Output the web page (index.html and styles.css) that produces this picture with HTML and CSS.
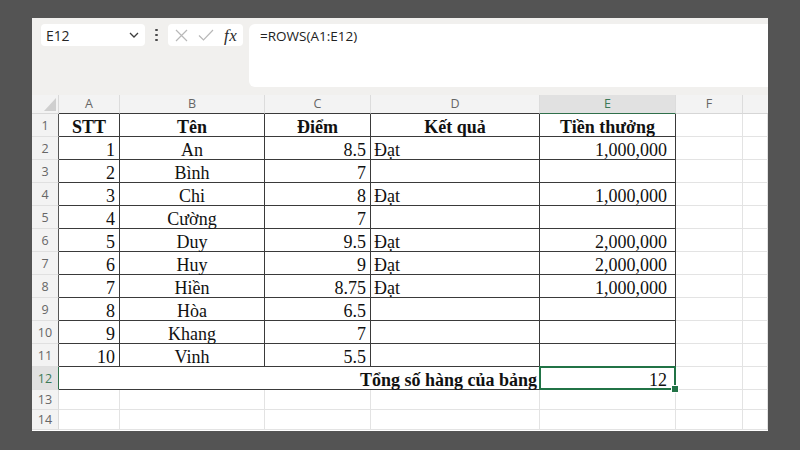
FILE: index.html
```html
<!DOCTYPE html>
<html lang="vi">
<head>
<meta charset="utf-8">
<title>ROWS</title>
<link rel="stylesheet" href="styles.css">
</head>
<body>
<div class="screen">
  <div class="app">
    <div class="toolbar">
      <div class="namebox">
        <span class="name">E12</span>
        <svg class="chev" width="10" height="6" viewBox="0 0 10 6"><path d="M1 1l4 4 4-4" stroke="#3d3d3d" fill="none" stroke-width="1.3"/></svg>
      </div>
      <div class="dots"><i></i><i></i><i></i></div>
      <div class="fxbox">
        <svg width="13" height="13" viewBox="0 0 13 13"><path d="M1 1l11 11M12 1L1 12" stroke="#b8b8b8" stroke-width="1.2" fill="none"/></svg>
        <svg class="check" width="16" height="12" viewBox="0 0 16 12"><path d="M1 6.5l4.5 4.5L15 1" stroke="#b8b8b8" fill="none" stroke-width="1.2"/></svg>
        <span class="fx">fx</span>
      </div>
      <div class="formula">=ROWS(A1:E12)</div>
    </div>

    <div class="sheet">
      <div class="corner"><svg width="12" height="13" viewBox="0 0 12 13"><polygon points="12,0 12,13 0,13" fill="#cfcfcf"/></svg></div>
      <div class="ch tb">A</div>
      <div class="ch tb">B</div>
      <div class="ch tb">C</div>
      <div class="ch tb">D</div>
      <div class="ch tb sel">E</div>
      <div class="ch">F</div>
      <div class="ch last"></div>

      <div class="rh tb">1</div>
      <div class="c t m b">STT</div>
      <div class="c t m b">Tên</div>
      <div class="c t m b">Điểm</div>
      <div class="c t m b">Kết quả</div>
      <div class="c t m b">Tiền thưởng</div>
      <div class="c"></div><div class="c"></div>

      <div class="rh tb">2</div>
      <div class="c t r">1</div><div class="c t m">An</div><div class="c t r">8.5</div><div class="c t l">Đạt</div><div class="c t r e">1,000,000</div>
      <div class="c"></div><div class="c"></div>

      <div class="rh tb">3</div>
      <div class="c t r">2</div><div class="c t m">Bình</div><div class="c t r">7</div><div class="c t l"></div><div class="c t r e"></div>
      <div class="c"></div><div class="c"></div>

      <div class="rh tb">4</div>
      <div class="c t r">3</div><div class="c t m">Chi</div><div class="c t r">8</div><div class="c t l">Đạt</div><div class="c t r e">1,000,000</div>
      <div class="c"></div><div class="c"></div>

      <div class="rh tb">5</div>
      <div class="c t r">4</div><div class="c t m">Cường</div><div class="c t r">7</div><div class="c t l"></div><div class="c t r e"></div>
      <div class="c"></div><div class="c"></div>

      <div class="rh tb">6</div>
      <div class="c t r">5</div><div class="c t m">Duy</div><div class="c t r">9.5</div><div class="c t l">Đạt</div><div class="c t r e">2,000,000</div>
      <div class="c"></div><div class="c"></div>

      <div class="rh tb">7</div>
      <div class="c t r">6</div><div class="c t m">Huy</div><div class="c t r">9</div><div class="c t l">Đạt</div><div class="c t r e">2,000,000</div>
      <div class="c"></div><div class="c"></div>

      <div class="rh tb">8</div>
      <div class="c t r">7</div><div class="c t m">Hiền</div><div class="c t r">8.75</div><div class="c t l">Đạt</div><div class="c t r e">1,000,000</div>
      <div class="c"></div><div class="c"></div>

      <div class="rh tb">9</div>
      <div class="c t r">8</div><div class="c t m">Hòa</div><div class="c t r">6.5</div><div class="c t l"></div><div class="c t r e"></div>
      <div class="c"></div><div class="c"></div>

      <div class="rh tb">10</div>
      <div class="c t r">9</div><div class="c t m">Khang</div><div class="c t r">7</div><div class="c t l"></div><div class="c t r e"></div>
      <div class="c"></div><div class="c"></div>

      <div class="rh tb">11</div>
      <div class="c t r">10</div><div class="c t m">Vinh</div><div class="c t r">5.5</div><div class="c t l"></div><div class="c t r e"></div>
      <div class="c"></div><div class="c"></div>

      <div class="rh sel">12</div>
      <div class="c t r b merged">Tổng số hàng của bảng</div>
      <div class="c t r e active">12</div>
      <div class="c"></div><div class="c"></div>

      <div class="rh small">13</div>
      <div class="c small"></div><div class="c small"></div><div class="c small"></div><div class="c small"></div><div class="c small"></div><div class="c small"></div><div class="c small"></div>

      <div class="rh small">14</div>
      <div class="c small"></div><div class="c small"></div><div class="c small"></div><div class="c small"></div><div class="c small"></div><div class="c small"></div><div class="c small"></div>
    </div>
  </div>
</div>
</body>
</html>
```

FILE: styles.css
```css
* { box-sizing: border-box; }

html, body {
  margin: 0;
  padding: 0;
  background: #545454;
}

.screen {
  width: 800px;
  height: 450px;
  padding: 18px 32px 0 32px;
}

.app {
  width: 736px;
  height: 413px;
  background: #f1f0ee;
  display: flex;
  flex-direction: column;
  overflow: hidden;
}

/* ---------- toolbar ---------- */
.toolbar {
  height: 77px;
  flex: none;
  display: flex;
  align-items: flex-start;
  padding: 6px 0 0 9px;
  font-family: "Open Sans", "Noto Sans", sans-serif;
}

.namebox {
  width: 104px;
  height: 22px;
  background: #fff;
  border-radius: 4px;
  display: flex;
  align-items: center;
  justify-content: space-between;
  padding: 0 6px 0 5px;
}

.name {
  font-size: 14px;
  color: #262626;
  letter-spacing: -0.1px;
}

.chev { display: block; }

.dots {
  width: 23px;
  height: 22px;
  display: flex;
  flex-direction: column;
  align-items: center;
  justify-content: center;
  gap: 2.5px;
}

.dots i {
  display: block;
  width: 2.5px;
  height: 2.5px;
  border-radius: 50%;
  background: #4a4a4a;
}

.fxbox {
  width: 75px;
  height: 22px;
  background: #fff;
  border-radius: 4px;
  display: flex;
  align-items: center;
  padding-left: 7px;
}

.fxbox svg { display: block; }
.fxbox .check { margin-left: 10px; }

.fx {
  margin-left: 10px;
  font-family: "Liberation Serif", serif;
  font-style: italic;
  font-size: 17px;
  color: #2b2b2b;
  line-height: 1;
  letter-spacing: 0.5px;
}

.formula {
  margin-left: 6px;
  flex: 1;
  height: 63px;
  background: #fff;
  border-radius: 6px 0 0 6px;
  padding: 2px 11px;
  font-size: 13.5px;
  line-height: 20px;
  color: #222;
}

/* ---------- grid ---------- */
.sheet {
  flex: 1;
  display: grid;
  grid-template-columns: 27px 61px 145px 106px 169px 136px 67px 1fr;
  grid-template-rows: 19px repeat(12, 23px) 20px 20px;
  background: #fff;
}

.corner {
  background: #f3f3f3;
  border-right: 1px solid #d9d9d9;
  border-bottom: 1px solid #d9d9d9;
  display: flex;
  align-items: flex-end;
  justify-content: flex-end;
  padding: 0 2px 2px 0;
}

.ch {
  background: #f3f3f3;
  border-right: 1px solid #dcdcdc;
  border-bottom: 1px solid #d6d6d6;
  font-family: "Open Sans", "Noto Sans", sans-serif;
  font-size: 12.5px;
  color: #666;
  text-align: center;
  line-height: 18px;
}

.ch.tb { border-bottom-color: #3a3a3a; }
.ch.last { border-right: none; }

.ch.sel {
  background: #e1e1e1;
  color: #3c7a58;
  border-bottom: 1px solid #2f6f4a;
}

.rh {
  background: #f3f3f3;
  border-right: 1px solid #d9d9d9;
  border-bottom: 1px solid #e0e0e0;
  font-family: "Open Sans", "Noto Sans", sans-serif;
  font-size: 12.5px;
  color: #666;
  text-align: center;
  line-height: 18px;
  padding-top: 3px;
}

.rh.tb { border-right-color: #555; }

.rh.sel {
  background: #e1e1e1;
  color: #3c7a58;
  border-right: 1px solid #2f6f4a;
}

.rh.small { padding-top: 1px; }

.c {
  border-right: 1px solid #e3e3e3;
  border-bottom: 1px solid #e3e3e3;
  font-family: "Liberation Serif", "Times New Roman", serif;
  font-size: 18px;
  line-height: 18px;
  color: #111;
  padding-top: 4px;
  white-space: nowrap;
}

.c.t {
  border-right-color: #3a3a3a;
  border-bottom-color: #3a3a3a;
}

.r { text-align: right; padding-right: 4px; }
.m { text-align: center; }
.l { text-align: left; padding-left: 3px; }
.b { font-weight: bold; }
.e { padding-right: 8px; }

.merged {
  grid-column: span 4;
  padding-right: 2px;
}

.active { position: relative; }

.active::after {
  content: "";
  position: absolute;
  left: -1px;
  top: -1px;
  right: -1px;
  bottom: -1px;
  border: 2px solid #217346;
}

.active::before {
  content: "";
  position: absolute;
  right: -4px;
  bottom: -4px;
  width: 6px;
  height: 6px;
  background: #217346;
  border: 1px solid #fff;
  z-index: 2;
}
```
